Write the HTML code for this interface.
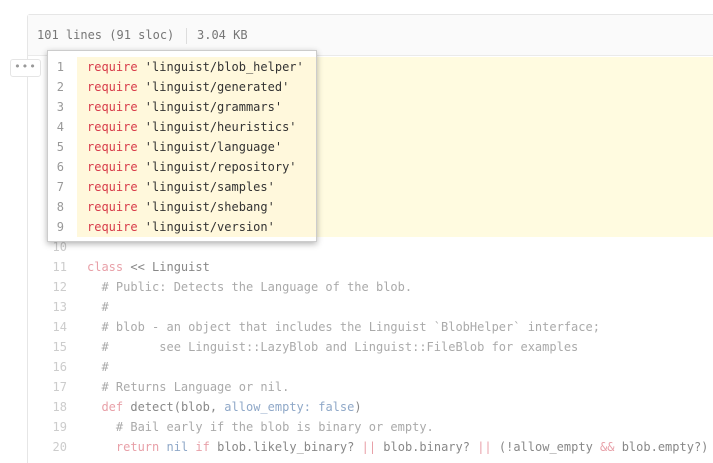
<!DOCTYPE html>
<html><head><meta charset="utf-8"><style>
*{margin:0;padding:0;box-sizing:border-box}
html,body{width:713px;height:463px;overflow:hidden}
body{background:#fff;font-family:"DejaVu Sans Mono","Liberation Mono",monospace;font-size:12px;position:relative}
.box{position:absolute;left:27px;top:14px;width:686px;height:449px;border:1px solid #e6e6e6;border-right:none;border-bottom:none;border-radius:3px 0 0 0}
.hdr{position:absolute;left:28px;top:15px;width:685px;height:41px;background:#fafafa;border-bottom:1px solid #eaeaea}
.sep{position:absolute;left:186px;top:28px;width:1px;height:16px;background:#ddd}
.yel{position:absolute;left:77px;top:57px;width:636px;height:180px;background:#fffbe0}
.ln{position:absolute;height:20px;line-height:21px}
.num{width:40px;text-align:right;left:27px;color:#ccc}
.code{left:87px;color:#999;white-space:pre}
.pop{position:absolute;left:47px;top:50px;width:270px;height:192px;background:#fff;border:1px solid #ccc;box-shadow:0 2px 6px rgba(0,0,0,.3);overflow:hidden}
.pop .y{position:absolute;left:29px;top:6px;width:300px;height:180px;background:#fff8dc}
.pop .num{left:-24px;color:#999}
.pop .code{left:39px;color:#333}
.k{color:#d73a49}
.fk{color:#e8a0a8}.fc{color:#aaa}.fb{color:#8fa8c8}.ft{color:#888}
.dots{position:absolute;left:10px;top:59px;width:31px;height:18px;border:1px solid #e5e5e5;border-radius:3px;background:#fff;color:#999;text-align:center;line-height:14px;font-size:11px;letter-spacing:1px}
</style></head><body>
<div class="box"></div>
<div class="hdr"></div>
<span style="position:absolute;left:37px;top:28px;color:#767676">101 lines (91 sloc)</span>
<div class="sep"></div>
<span style="position:absolute;left:197px;top:28px;color:#767676">3.04 KB</span>
<div class="yel"></div>
<div class="dots">•••</div>

<div class="ln num" style="top:237px">10</div>
<div class="ln num" style="top:257px">11</div><div class="ln code" style="top:257px"><span class="fk">class</span><span class="ft"> &lt;&lt; Linguist</span></div>
<div class="ln num" style="top:277px">12</div><div class="ln code fc" style="top:277px">  # Public: Detects the Language of the blob.</div>
<div class="ln num" style="top:297px">13</div><div class="ln code fc" style="top:297px">  #</div>
<div class="ln num" style="top:317px">14</div><div class="ln code fc" style="top:317px">  # blob - an object that includes the Linguist `BlobHelper` interface;</div>
<div class="ln num" style="top:337px">15</div><div class="ln code fc" style="top:337px">  #       see Linguist::LazyBlob and Linguist::FileBlob for examples</div>
<div class="ln num" style="top:357px">16</div><div class="ln code fc" style="top:357px">  #</div>
<div class="ln num" style="top:377px">17</div><div class="ln code fc" style="top:377px">  # Returns Language or nil.</div>
<div class="ln num" style="top:397px">18</div><div class="ln code ft" style="top:397px">  <span class="fk">def</span> detect(blob, <span class="fb">allow_empty:</span> <span class="fb">false</span>)</div>
<div class="ln num" style="top:417px">19</div><div class="ln code fc" style="top:417px">    # Bail early if the blob is binary or empty.</div>
<div class="ln num" style="top:437px">20</div><div class="ln code ft" style="top:437px">    <span class="fk">return</span> <span class="fb">nil</span> <span class="fk">if</span> blob.likely_binary? <span class="fk">||</span> blob.binary? <span class="fk">||</span> (!allow_empty <span class="fk">&amp;&amp;</span> blob.empty?)</div>

<div class="pop">
<div class="y"></div>
<div class="ln num" style="top:6px">1</div><div class="ln code" style="top:6px"><span class="k">require</span> 'linguist/blob_helper'</div>
<div class="ln num" style="top:26px">2</div><div class="ln code" style="top:26px"><span class="k">require</span> 'linguist/generated'</div>
<div class="ln num" style="top:46px">3</div><div class="ln code" style="top:46px"><span class="k">require</span> 'linguist/grammars'</div>
<div class="ln num" style="top:66px">4</div><div class="ln code" style="top:66px"><span class="k">require</span> 'linguist/heuristics'</div>
<div class="ln num" style="top:86px">5</div><div class="ln code" style="top:86px"><span class="k">require</span> 'linguist/language'</div>
<div class="ln num" style="top:106px">6</div><div class="ln code" style="top:106px"><span class="k">require</span> 'linguist/repository'</div>
<div class="ln num" style="top:126px">7</div><div class="ln code" style="top:126px"><span class="k">require</span> 'linguist/samples'</div>
<div class="ln num" style="top:146px">8</div><div class="ln code" style="top:146px"><span class="k">require</span> 'linguist/shebang'</div>
<div class="ln num" style="top:166px">9</div><div class="ln code" style="top:166px"><span class="k">require</span> 'linguist/version'</div>
</div>
</body></html>
